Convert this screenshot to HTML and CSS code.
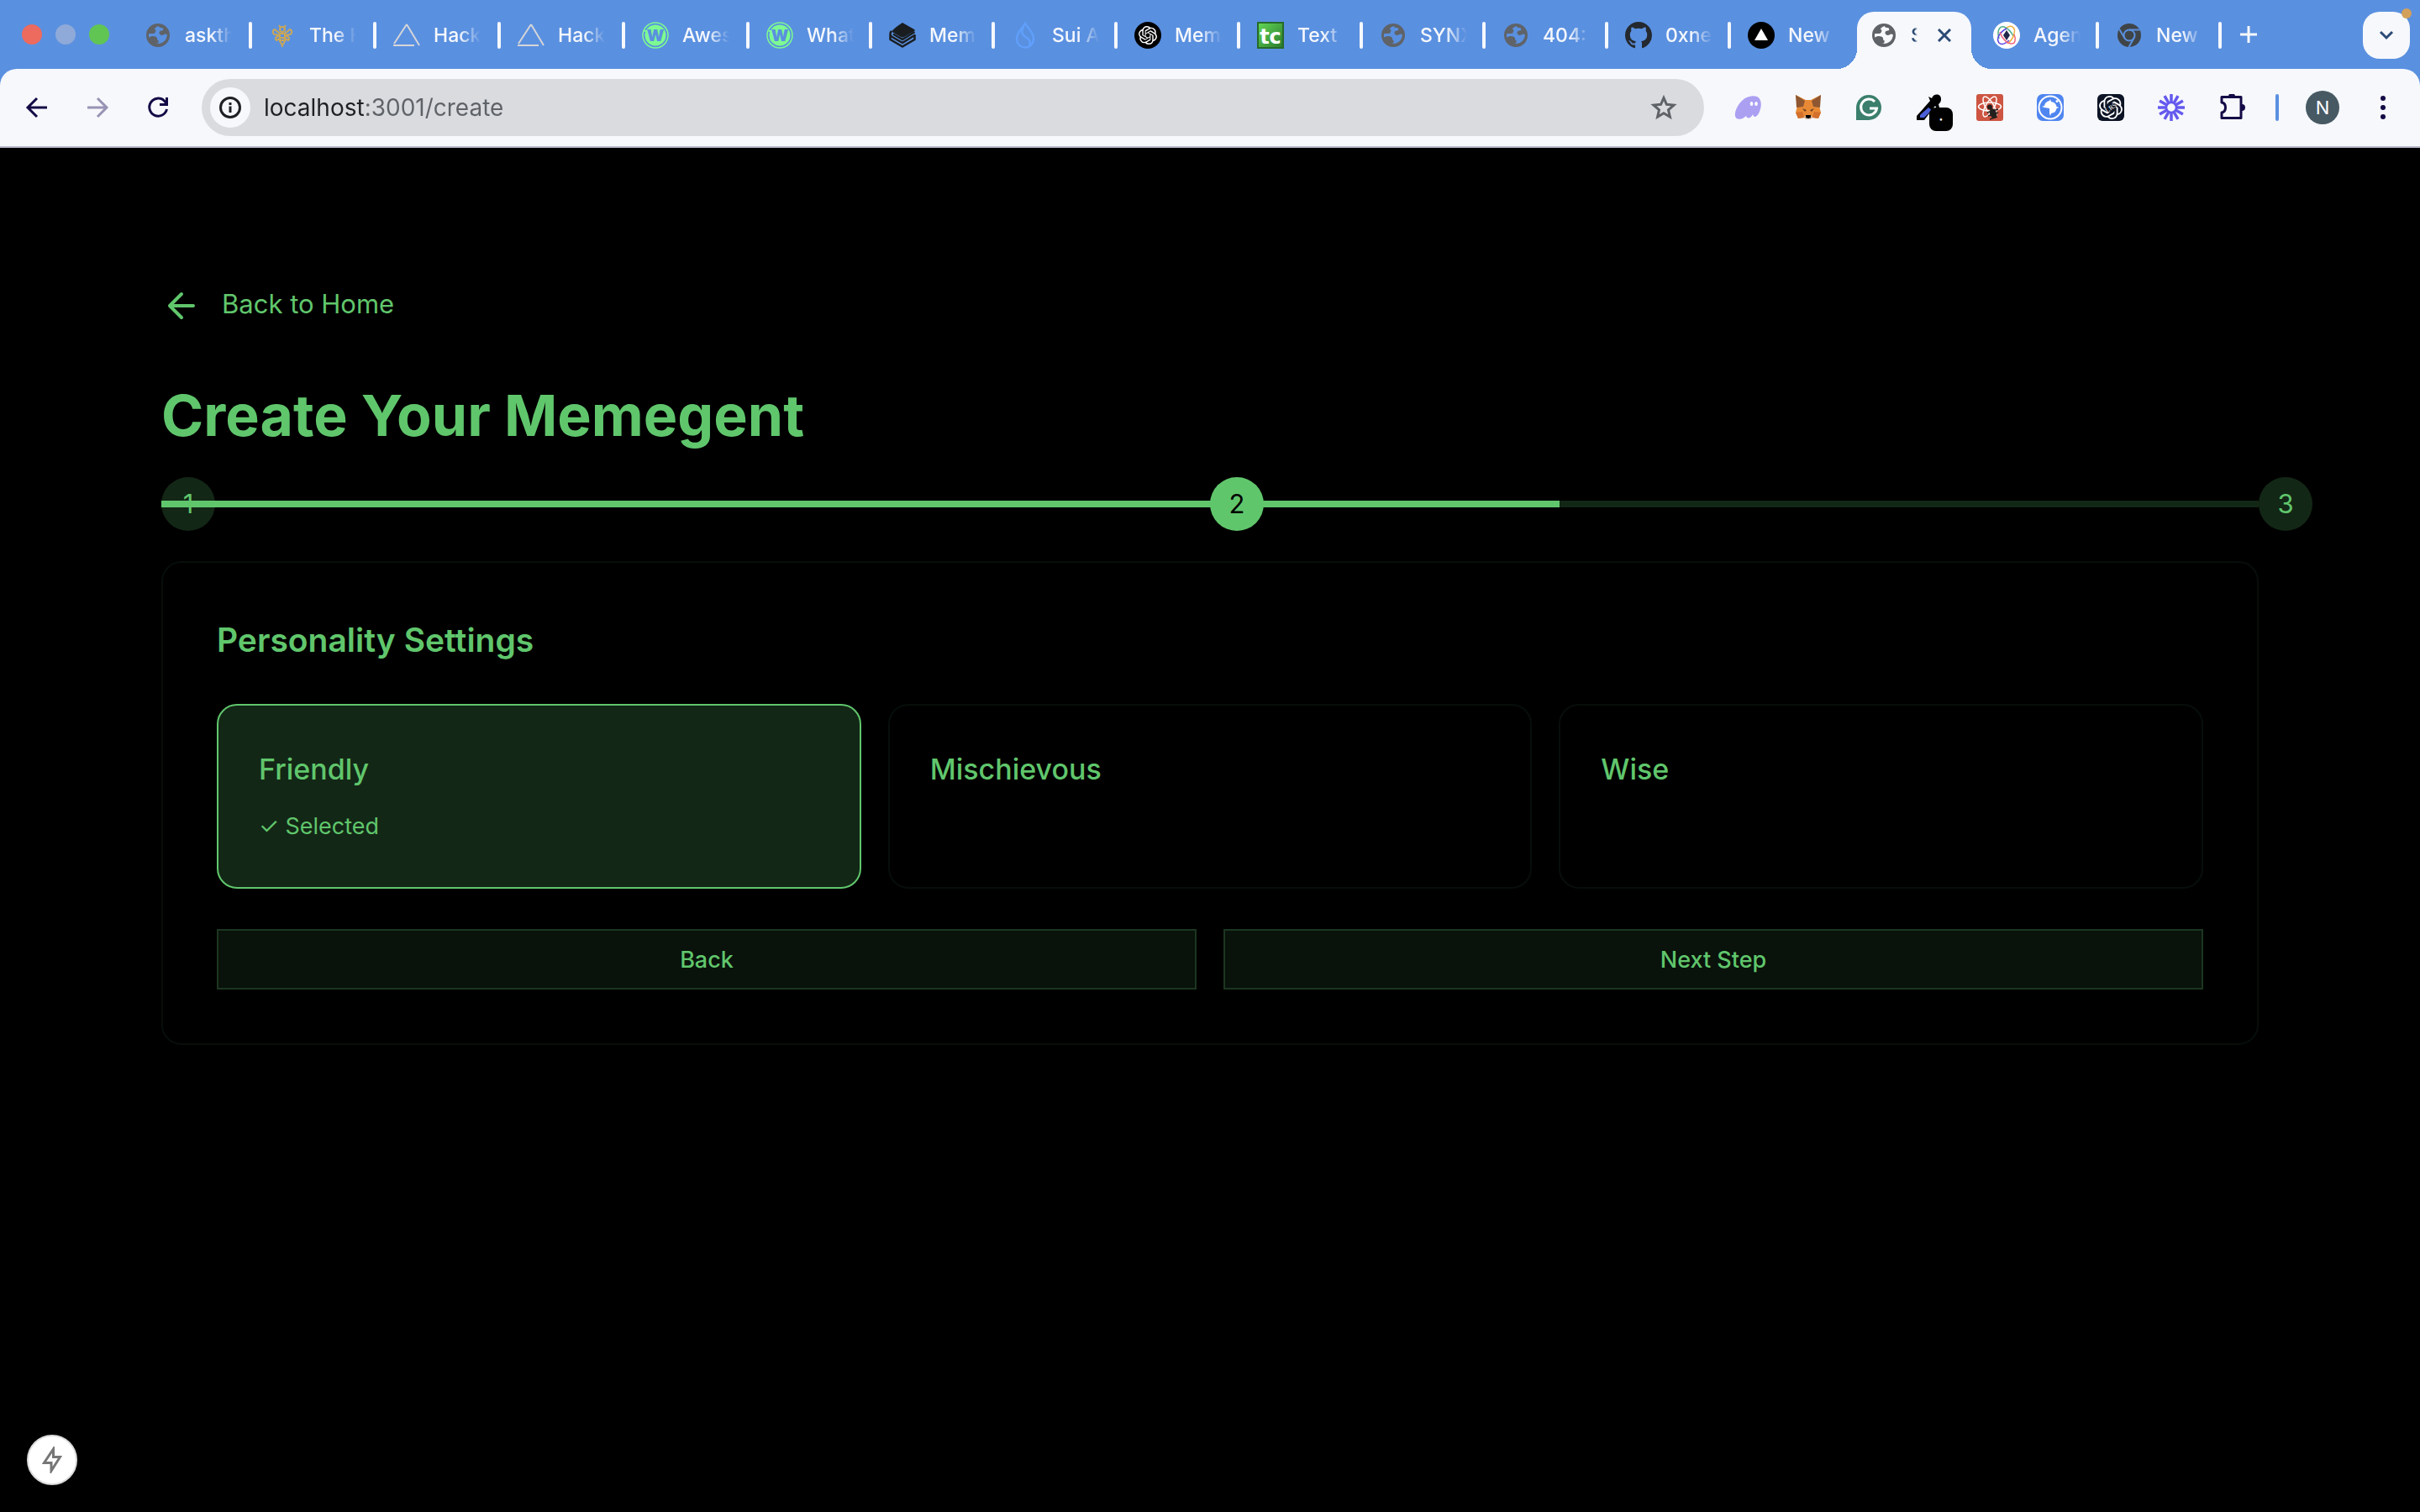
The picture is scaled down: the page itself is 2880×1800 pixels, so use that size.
FILE: index.html
```html
<!DOCTYPE html>
<html lang="en">
<head>
  <meta charset="UTF-8" />
  <meta name="viewport" content="width=device-width, initial-scale=1.0"/>
  <title>Create Your Memegent</title>
  <link rel="stylesheet" href="styles.css">
</head>
<body>

  <!-- Shared icons -->
  <svg class="sprite" aria-hidden="true">
    <symbol id="globe" viewBox="0 0 32 32">
      <path fill-rule="evenodd" d="M16 2a14 14 0 1 0 0 28a14 14 0 1 0 0-28zM17 5c-3 1-5 2-5 4c1 0 2 1 1 3c-1 2-2 2-4 2H5.300c-.5 1.500-.4 3 0 4.500c2-1.500 5-2 7.700-1c2 .8 2.500 2.500 2 4c1.500 0 2 1 1.500 3c-.3 1-1.500 1-2.500 1.300c7 1 12-3 13-10.300c-1.500-1-3-1.300-4-.3c-2 1.500-5 .8-5.500-1.700c-.3-2 1-3 3-3c1.500 0 2-.8 1.700-2c-.3-1.200-1.200-1.500-2.700-1.500c-1.500 0-2.500-.8-2.500-2z"/>
    </symbol>
    <symbol id="peak" viewBox="0 0 32 32">
      <path fill="none" stroke="#d5d5d8" stroke-width="2" d="M1 26L16 3M16 3L31 28M0 28h25"/>
    </symbol>
    <symbol id="wordle" viewBox="0 0 32 32">
      <circle cx="16" cy="16" r="15" fill="none" stroke="#7dfa92" stroke-width="1.500"/>
      <circle cx="16" cy="16" r="12.500" fill="#7dfa92"/>
      <path d="M2 10h9v2H3z" fill="#7dfa92"/>
      <text x="16" y="23" text-anchor="middle" class="w-letter">W</text>
    </symbol>
    <symbol id="knot" viewBox="0 0 24 24">
      <path d="M22.2819 9.8211a5.9847 5.9847 0 0 0-.5157-4.9108 6.0462 6.0462 0 0 0-6.5098-2.9A6.0651 6.0651 0 0 0 4.9807 4.1818a5.9847 5.9847 0 0 0-3.9977 2.9 6.0462 6.0462 0 0 0 .7427 7.0966 5.98 5.98 0 0 0 .511 4.9107 6.051 6.051 0 0 0 6.5146 2.9001A5.9847 5.9847 0 0 0 13.2599 24a6.0557 6.0557 0 0 0 5.7718-4.2058 5.9894 5.9894 0 0 0 3.9977-2.9001 6.0557 6.0557 0 0 0-.7475-7.0729zm-9.022 12.6081a4.4755 4.4755 0 0 1-2.8764-1.0408l.1419-.0804 4.7783-2.7582a.7948.7948 0 0 0 .3927-.6813v-6.7369l2.02 1.1686a.071.071 0 0 1 .038.052v5.5826a4.504 4.504 0 0 1-4.4945 4.4944zm-9.6607-4.1254a4.4708 4.4708 0 0 1-.5346-3.0137l.142.0852 4.783 2.7582a.7712.7712 0 0 0 .7806 0l5.8428-3.3685v2.3324a.0804.0804 0 0 1-.0332.0615L9.74 19.9502a4.4992 4.4992 0 0 1-6.1408-1.6464zM2.3408 7.8956a4.485 4.485 0 0 1 2.3655-1.9728V11.6a.7664.7664 0 0 0 .3879.6765l5.8144 3.3543-2.0201 1.1685a.0757.0757 0 0 1-.071 0l-4.8303-2.7865A4.504 4.504 0 0 1 2.3408 7.872zm16.5963 3.8558L13.1038 8.364 15.1192 7.2a.0757.0757 0 0 1 .071 0l4.8303 2.7913a4.4944 4.4944 0 0 1-.6765 8.1042v-5.6772a.79.79 0 0 0-.407-.667zm2.0107-3.0231l-.142-.0852-4.7735-2.7818a.7759.7759 0 0 0-.7854 0L9.409 9.2297V6.8974a.0662.0662 0 0 1 .0284-.0615l4.8303-2.7866a4.4992 4.4992 0 0 1 6.6802 4.66zM8.3065 12.863l-2.02-1.1638a.0804.0804 0 0 1-.038-.0567V6.0742a4.4992 4.4992 0 0 1 7.3757-3.4537l-.142.0805L8.704 5.459a.7948.7948 0 0 0-.3927.6813zm1.0976-2.3654l2.602-1.4998 2.6069 1.4998v2.9994l-2.5974 1.4997-2.6067-1.4997Z"/>
    </symbol>
  </svg>

  <header class="browser">
    <div class="tab-strip">
      <div class="lights">
        <span class="light red"></span>
        <span class="light blue"></span>
        <span class="light green"></span>
      </div>

      <button class="tab wide"><svg class="favicon gray"><use href="#globe"/></svg><span class="tab-name">askth</span></button>
      <button class="tab wide">
        <svg class="favicon" viewBox="0 0 32 32" fill="none" stroke="#c9a659" stroke-width="2">
          <circle cx="16" cy="9" r="3"/><path d="M14 7l-2-3M18 7l2-3M13 14L7 9C4 10 4 14 7 15l6 1zM19 14l6-5c3 1 3 5 0 6l-6 1zM12 17c-4 0-5 3-3 5l4-2M20 17c4 0 5 3 3 5l-4-2M13 14h6v9l-3 5-3-5zM13 19h6M13 22h6M16 27v3"/>
        </svg>
        <span class="tab-name">The H</span>
      </button>
      <button class="tab wide"><svg class="favicon"><use href="#peak"/></svg><span class="tab-name">Hack</span></button>
      <button class="tab wide"><svg class="favicon"><use href="#peak"/></svg><span class="tab-name">Hack</span></button>
      <button class="tab wide"><svg class="favicon"><use href="#wordle"/></svg><span class="tab-name">Awes</span></button>
      <button class="tab"><svg class="favicon"><use href="#wordle"/></svg><span class="tab-name">What</span></button>
      <button class="tab">
        <svg class="favicon" viewBox="0 0 32 32">
          <path fill="#191d20" d="M16 1l14 8c1 .6 1 1.400 0 2L18 18c-1.300.8-2.700.8-4 0L3 11.500C6 8 11 4 16 1z"/>
          <path fill="none" stroke="#191d20" stroke-width="2.500" stroke-linejoin="round" d="M3 11c-2 2-2 5 0 6.500l13 7.500 14.500-9v5L16 29.500 1.500 21v-6M5 14.500l11 6.500 14.500-9"/>
        </svg>
        <span class="tab-name">Mem</span>
      </button>
      <button class="tab">
        <svg class="favicon" viewBox="0 0 32 32" fill="none" stroke="#609ffa" stroke-width="2.500">
          <path d="M16 2c-4 6-10 11-10 18 0 6 4.500 10.500 10 10.500S26 26 26 20C26 13 20 8 16 2zM14 6c-4 9 0 10 4 13 4 3 5 7 2 11"/>
        </svg>
        <span class="tab-name">Sui A</span>
      </button>
      <button class="tab"><span class="favicon disc"><svg class="knot-small"><use href="#knot"/></svg></span><span class="tab-name">Mem</span></button>
      <button class="tab">
        <svg class="favicon" viewBox="0 0 32 32">
          <defs><linearGradient id="leaf" x1="0" y1="0" x2="1" y2="1"><stop offset="0" stop-color="#63d857"/><stop offset="1" stop-color="#2a7a2c"/></linearGradient></defs>
          <rect x="1" y="1" width="30" height="30" fill="url(#leaf)" stroke="#276a29" stroke-width="2"/>
          <text x="16" y="26" text-anchor="middle" class="tc-letters">tc</text>
        </svg>
        <span class="tab-name">Text</span>
      </button>
      <button class="tab"><svg class="favicon gray"><use href="#globe"/></svg><span class="tab-name">SYNX</span></button>
      <button class="tab"><svg class="favicon gray"><use href="#globe"/></svg><span class="tab-name">404:</span></button>
      <button class="tab">
        <svg class="favicon" viewBox="0 0 16 16"><path fill="#24292f" d="M8 0C3.580 0 0 3.580 0 8c0 3.540 2.290 6.530 5.470 7.590.4.070.55-.17.55-.38 0-.19-.01-.82-.01-1.490-2.010.37-2.530-.49-2.690-.94-.09-.23-.48-.94-.82-1.130-.28-.15-.68-.52-.01-.53.63-.01 1.080.58 1.230.82.72 1.210 1.870.87 2.330.66.07-.52.28-.87.51-1.070-1.780-.2-3.640-.89-3.640-3.950 0-.87.31-1.590.82-2.150-.08-.2-.36-1.020.08-2.120 0 0 .67-.21 2.200.82.64-.18 1.320-.27 2-.27.68 0 1.360.09 2 .27 1.530-1.040 2.200-.82 2.200-.82.44 1.100.16 1.920.08 2.120.51.56.82 1.270.82 2.150 0 3.070-1.870 3.750-3.650 3.950.29.25.54.73.54 1.480 0 1.070-.01 1.930-.01 2.200 0 .21.15.46.55.38A8.013 8.013 0 0 0 16 8c0-4.420-3.580-8-8-8z"/></svg>
        <span class="tab-name">0xne</span>
      </button>
      <button class="tab last">
        <svg class="favicon" viewBox="0 0 32 32"><circle cx="16" cy="16" r="16"/><path fill="#fff" d="M16 8l8 14H8z"/></svg>
        <span class="tab-name">New</span>
      </button>

      <div class="tab-active">
        <svg class="favicon gray"><use href="#globe"/></svg>
        <span class="tab-name short">S</span>
        <button class="close-tab" aria-label="Close tab"><svg viewBox="0 0 16 16" fill="none" stroke="#2b4a75" stroke-width="3"><path d="M1 1l14 14M15 1L1 15"/></svg></button>
      </div>

      <button class="tab">
        <svg class="favicon" viewBox="0 0 32 32" fill="none" stroke-width="1.500">
          <circle cx="16" cy="16" r="16" fill="#fff"/>
          <path stroke="#4fae8c" d="M7 20C4 10 8 3 15 7c4 2 7 6 9 10"/>
          <path stroke="#efb23e" d="M16 7c6-4 11 0 9 7-1 5-4 9-8 12"/>
          <path stroke="#5a3fe0" d="M16 8C8 12 3 20 7 25c3 3 8 1 12-3"/>
          <path stroke="#ef6a80" d="M8 12c2 7 8 14 14 14 5 0 5-6 3-11"/>
          <path fill="#22284a" d="M16 10l4 6-4 6-4-6z"/>
        </svg>
        <span class="tab-name">Agen</span>
      </button>
      <button class="tab">
        <svg class="favicon" viewBox="0 0 32 32">
          <circle cx="16" cy="16" r="14" fill="#3f4448"/>
          <circle cx="16" cy="16" r="6.500" fill="none" stroke="#5a90e0" stroke-width="2"/>
          <path fill="none" stroke="#5a90e0" stroke-width="2" d="M16 9.500h12.500M10.400 19.200L4 8.500M21.600 19.200L15.500 30"/>
        </svg>
        <span class="tab-name">New</span>
      </button>

      <button class="new-tab" aria-label="New tab"><svg viewBox="0 0 20 20" fill="none" stroke="#f6f8fc" stroke-width="3"><path d="M10 0v20M0 10h20"/></svg></button>
      <button class="tab-menu" aria-label="Search tabs">
        <svg viewBox="0 0 18 12" fill="none" stroke="#2b4a75" stroke-width="3"><path d="M2 2l7 7 7-7"/></svg>
        <span class="notice"></span>
      </button>
    </div>

    <div class="toolbar">
      <button class="tool" aria-label="Back"><svg viewBox="0 0 32 32" fill="none" stroke="#140a46" stroke-width="3"><path d="M28 16H6M16 5L5 16l11 11"/></svg></button>
      <button class="tool" aria-label="Forward"><svg viewBox="0 0 32 32" fill="none" stroke="#9893b4" stroke-width="3"><path d="M4 16h22M16 5l11 11-11 11"/></svg></button>
      <button class="tool" aria-label="Reload"><svg viewBox="0 0 32 32" fill="none" stroke="#140a46" stroke-width="3"><path d="M26.500 18a10.500 10.500 0 1 1-3-10L26 11M26.500 4v8.500H18"/></svg></button>

      <div class="address">
        <button class="site-info" aria-label="Site information"><svg viewBox="0 0 26 26" fill="none" stroke="#1f2023" stroke-width="3"><circle cx="13" cy="13" r="11.500"/><path d="M13 11.500V19M13 7v3"/></svg></button>
        <input type="text" aria-label="Address" value="localhost:3001/create">
        <button class="star" aria-label="Bookmark"><svg viewBox="0 0 32 32" fill="none" stroke="#5f6368" stroke-width="3"><path d="M16 4.500l3.400 7.800 8.600.8-6.500 5.700 1.900 8.400L16 22.800l-7.400 4.400 1.900-8.400L4 13.100l8.600-.8z"/></svg></button>
      </div>

      <button class="tool" aria-label="Wallet">
        <svg viewBox="0 0 32 32"><path fill="#ab9ff2" d="M4 29.500C-2 28 1 16 9 8c5-5 12-7 18-5 6 3 6 12 2 20-2 4-6 6-7 1-2 5-7 6-8 2-3 3-6 4.500-10 3.500z"/><ellipse cx="20.500" cy="11.500" rx="1.800" ry="2.500" fill="#fff"/><ellipse cx="26" cy="11.500" rx="1.800" ry="2.500" fill="#fff"/></svg>
      </button>
      <button class="tool" aria-label="Fox wallet">
        <svg viewBox="0 0 32 32"><path fill="#e88a35" d="M1 1l12 6h6l12-6-2 13 2 8-3 7-7-1-3 2h-4l-3-2-7 1-3-7 2-8z"/><path fill="#8e5731" d="M1 1l11 7-2 7-8 1zM31 1L20 8l2 7 8 1z"/><path fill="#d2702c" d="M1 22l8-1 2 7-7 1zM31 22l-8-1-2 7 7 1z"/><path fill="#6b4124" d="M9 17l5 2-2 2zM23 17l-5 2 2 2z"/><path fill="#cfc0b4" d="M11 27l3-2h4l3 2-3 3h-4z"/><path d="M13 25h6v3l-3 1-3-1z"/></svg>
      </button>
      <button class="tool" aria-label="Writing assistant">
        <svg viewBox="0 0 32 32"><path fill="#3b7f6c" d="M16 1a15 15 0 1 1 0 30H1V16A15 15 0 0 1 16 1z"/><path fill="none" stroke="#fff" stroke-width="3" d="M23 9a9.500 9.500 0 1 0 2.500 8H17"/></svg>
      </button>
      <button class="tool" aria-label="Color picker">
        <svg viewBox="0 0 32 32"><path d="M15 3l4 2c2-6 11-6 11 1 0 3-1 4-3 6l1 4-3 1-2-3-13 17H1v-5L17 8z"/><path fill="#4b60d8" d="M15 16l4 3-9 9H5v-3z"/></svg>
        <span class="badge">·</span>
      </button>
      <button class="tool" aria-label="Developer tools">
        <svg viewBox="0 0 32 32"><rect width="32" height="32" rx="3" fill="#cd5542"/><g fill="none" stroke="#fff" stroke-width="1.500"><ellipse cx="16" cy="15" rx="13.500" ry="5"/><ellipse cx="16" cy="15" rx="13.500" ry="5" transform="rotate(60 16 15)"/><ellipse cx="16" cy="15" rx="13.500" ry="5" transform="rotate(120 16 15)"/></g><circle cx="16" cy="15.500" r="3" fill="#24201e"/><ellipse cx="20" cy="23" rx="4" ry="6" fill="#24201e" transform="rotate(-20 20 23)"/><path stroke="#24201e" stroke-width="1.500" d="M13 22l13-4M14 26l12-4M16 30l9-3"/></svg>
      </button>
      <button class="tool" aria-label="Compass">
        <svg viewBox="0 0 32 32"><rect width="32" height="32" rx="7" fill="#4f86f0"/><circle cx="16" cy="16" r="13.500" fill="none" stroke="#fff" stroke-width="2"/><path fill="#fff" d="M16 6l1 3c4 .5 6 2.500 6.500 6l3 1-3 1c-.5 3.500-2.500 5.500-6.500 6l-1 3-1-3v-6l-6-1-3-1 3-1c.5-3.500 2.500-5.500 6-6z"/><circle cx="24" cy="8.500" r="1.500" fill="#fff"/></svg>
      </button>
      <button class="tool" aria-label="Chat search">
        <svg viewBox="0 0 32 32"><rect width="32" height="32" rx="6" fill="#0c1425"/><use href="#knot" x="2" y="2" width="28" height="28" fill="#fff"/><circle cx="16" cy="16" r="6" fill="#0c1425"/><text x="16" y="19" text-anchor="middle" class="knot-letters" transform="rotate(-35 16 16)">LRS</text></svg>
      </button>
      <button class="tool" aria-label="Burst">
        <svg viewBox="0 0 32 32" fill="none" stroke="#6459ee" stroke-width="3.500"><circle cx="16" cy="16" r="6" stroke-width="2.500"/><path d="M16 0v10M16 22v10M0 16h10M22 16h10M8 2.100l5 8.700M19 21.200l5 8.700M2.100 8l8.700 5M21.200 19l8.700 5M2.100 24l8.700-5M21.200 13l8.700-5M8 29.900l5-8.700M19 10.800l5-8.700"/></svg>
      </button>
      <button class="tool" aria-label="Extensions">
        <svg viewBox="0 0 32 32"><path fill="none" stroke="#140a46" stroke-width="3" stroke-linejoin="round" d="M4 3.500h23v25H4V22c6-1 6-11 0-12z"/><path fill="#140a46" d="M12 3a4 4 0 0 1 8 0zM28 12a4 4 0 0 1 0 8z"/></svg>
      </button>

      <span class="divider"></span>
      <button class="tool" aria-label="Profile"><span class="avatar">N</span></button>
      <button class="tool" aria-label="Menu"><svg viewBox="0 0 32 32" fill="#140a46"><circle cx="16" cy="5" r="3"/><circle cx="16" cy="16" r="3"/><circle cx="16" cy="27" r="3"/></svg></button>
    </div>
  </header>

  <main class="page">
    <a class="back-link" href="#">
      <svg viewBox="0 0 24 24" fill="none" stroke="currentColor" stroke-width="2" stroke-linecap="round" stroke-linejoin="round"><path d="M12 19l-7-7 7-7M19 12H5"/></svg>
      <span>Back to Home</span>
    </a>

    <h1>Create Your Memegent</h1>

    <div class="steps">
      <div class="track"><div class="fill"></div></div>
      <div class="circles">
        <span class="circle">1</span>
        <span class="circle current">2</span>
        <span class="circle next">3</span>
      </div>
    </div>

    <section class="card">
      <h2>Personality Settings</h2>
      <div class="options">
        <button class="option selected" aria-pressed="true">
          <span class="option-name">Friendly</span>
          <span class="option-state">✓ Selected</span>
        </button>
        <button class="option" aria-pressed="false"><span class="option-name">Mischievous</span></button>
        <button class="option" aria-pressed="false"><span class="option-name">Wise</span></button>
      </div>
      <div class="actions">
        <button class="action">Back</button>
        <button class="action">Next Step</button>
      </div>
    </section>
  </main>

  <button class="dev-button" aria-label="Dev tools">
    <svg viewBox="0 0 24 32" fill="none" stroke="#767676" stroke-width="3"><path d="M13.500 3L2.500 19.500h8.500V29L21.500 12.500H13.500z"/></svg>
  </button>

  <script>
    const options = document.querySelectorAll('.option');

    // Only one personality can be chosen
    options.forEach((option) => {
      option.addEventListener('click', () => {
        options.forEach((o) => {
          o.classList.remove('selected');
          o.setAttribute('aria-pressed', 'false');
          const state = o.querySelector('.option-state');
          if (state) state.remove();
        });
        option.classList.add('selected');
        option.setAttribute('aria-pressed', 'true');
        option.insertAdjacentHTML('beforeend', '<span class="option-state">✓ Selected</span>');
      });
    });
  </script>

</body>
</html>
```
FILE: styles.css
```css
* {
  box-sizing: border-box;
}

body {
  margin: 0;
  min-height: 100vh;
  background-color: #000;
  color: #60c66c;
  font-family: Inter, "Liberation Sans", sans-serif;
}

button {
  margin: 0;
  padding: 0;
  border: none;
  background: none;
  color: inherit;
  font: inherit;
  cursor: pointer;
}

.sprite {
  display: none;
}

/* Browser bar */
.browser {
  background-color: #5a90e0;
}

.tab-strip {
  display: flex;
  height: 82px;
  padding: 0 12px 0 26px;
}

.lights {
  display: flex;
  align-items: center;
  gap: 16px;
  width: 126px;
}

.light {
  width: 24px;
  height: 24px;
  border-radius: 50%;
}

.light.red {
  background-color: #ed6a5e;
}

.light.blue {
  background-color: #8faad8;
}

.light.green {
  background-color: #61c554;
}

.tab {
  flex: 0 1 146px;
  display: flex;
  align-items: center;
  gap: 16px;
  padding: 2px 0 0 20px;
  color: #f6f8fc;
}

.tab.wide {
  flex-basis: 148px;
}

.tab.last {
  flex-basis: 150px;
}

.tab::after {
  content: "";
  width: 4px;
  height: 32px;
  margin-left: auto;
  border-radius: 2px;
  background-color: #f6f8fc;
}

.tab.last::after {
  display: none;
}

.favicon {
  width: 32px;
  height: 32px;
  flex: none;
}

.favicon.gray {
  fill: #5f6368;
}

.favicon.disc {
  display: flex;
  align-items: center;
  justify-content: center;
  border-radius: 50%;
  background-color: #000;
}

.knot-small {
  width: 22px;
  height: 22px;
  fill: #fff;
}

.tab-name {
  width: 56px;
  overflow: hidden;
  white-space: nowrap;
  text-align: left;
  font-size: 23px;
  font-weight: 500;
  line-height: 32px;
  -webkit-mask-image: linear-gradient(to right, #000 55%, transparent);
  mask-image: linear-gradient(to right, #000 55%, transparent);
}

.tab-name.short {
  width: 8px;
}

.tab-active {
  position: relative;
  flex: 0 1 134px;
  display: flex;
  align-items: center;
  gap: 16px;
  height: 68px;
  margin: 14px 6px 0 0;
  padding: 0 16px 12px;
  border-radius: 20px 20px 0 0;
  background-color: #f6f8fc;
  color: #2b4a75;
}

/* Curved feet of the open tab */
.tab-active::before,
.tab-active::after {
  content: "";
  position: absolute;
  bottom: 0;
  width: 24px;
  height: 24px;
}

.tab-active::before {
  right: 100%;
  background: radial-gradient(circle at 0 0, transparent 24px, #f6f8fc 24px);
}

.tab-active::after {
  left: 100%;
  background: radial-gradient(circle at 100% 0, transparent 24px, #f6f8fc 24px);
}

.close-tab {
  display: flex;
  margin-left: auto;
  padding: 8px;
}

.close-tab svg {
  width: 16px;
  height: 16px;
}

.new-tab {
  display: flex;
  align-items: center;
  justify-content: center;
  width: 64px;
}

.new-tab svg {
  width: 20px;
  height: 20px;
}

.tab-menu {
  position: relative;
  display: flex;
  align-items: center;
  justify-content: center;
  width: 56px;
  height: 56px;
  margin: 14px 0 0 auto;
  border-radius: 20px;
  background-color: #f6f8fc;
}

.tab-menu svg {
  width: 18px;
  height: 12px;
}

.notice {
  position: absolute;
  top: -4px;
  right: -2px;
  width: 12px;
  height: 12px;
  border-radius: 50%;
  background-color: #d3a05c;
}

.w-letter {
  fill: #5a90e0;
  font: 900 19px Inter, sans-serif;
}

.tc-letters {
  fill: #fff;
  font: bold 24px "DejaVu Sans", sans-serif;
}

.knot-letters {
  fill: #fff;
  font: 8px "Liberation Serif", serif;
}

.toolbar {
  display: flex;
  align-items: center;
  height: 94px;
  padding: 0 8px;
  border-bottom: 2px solid #b9bccd;
  border-radius: 20px 20px 0 0;
  background-color: #f6f8fc;
}

.tool {
  position: relative;
  display: flex;
  align-items: center;
  justify-content: center;
  flex: none;
  width: 72px;
  height: 68px;
}

.tool svg {
  width: 32px;
  height: 32px;
}

.address {
  flex: 1;
  display: flex;
  align-items: center;
  height: 68px;
  margin: 0 16px;
  padding: 0 32px 0 10px;
  border-radius: 34px;
  background-color: #d9dbdf;
}

.site-info {
  display: flex;
  align-items: center;
  justify-content: center;
  width: 48px;
  height: 48px;
  border-radius: 50%;
  background-color: #f6f8fc;
}

.site-info svg {
  width: 26px;
  height: 26px;
}

/* Host in dark, path in gray */
.address input {
  flex: 1;
  margin: 0 16px;
  padding: 0;
  border: none;
  outline: none;
  background: linear-gradient(to right, #1f2023 120px, #5f6368 120px);
  -webkit-background-clip: text;
  background-clip: text;
  color: transparent;
  font: 28px Inter, "Liberation Sans", sans-serif;
}

.star {
  display: flex;
}

.star svg {
  width: 32px;
  height: 32px;
}

.badge {
  position: absolute;
  left: 36px;
  top: 34px;
  width: 28px;
  height: 28px;
  border-radius: 8px;
  background-color: #000;
  color: #fff;
  font-size: 20px;
  line-height: 28px;
  text-align: center;
}

.divider {
  width: 4px;
  height: 32px;
  margin: 0 16px;
  border-radius: 2px;
  background-color: #5a90e0;
}

.avatar {
  width: 40px;
  height: 40px;
  border-radius: 50%;
  background-color: #475963;
  color: #fff;
  font-size: 22px;
  line-height: 40px;
}

/* Page */
.page {
  padding: 160px 192px 0;
}

.back-link {
  display: flex;
  align-items: flex-start;
  gap: 24px;
  width: fit-content;
  color: inherit;
  font-size: 31px;
  line-height: 52px;
  text-decoration: none;
}

.back-link svg {
  width: 48px;
  height: 48px;
  margin-top: 4px;
}

h1 {
  margin: 64px 0 32px;
  font-size: 68px;
  font-weight: 700;
  line-height: 84px;
}

.steps {
  display: grid;
  align-items: center;
  margin-bottom: 36px;
}

.track,
.circles {
  grid-area: 1 / 1;
}

.track {
  z-index: 1;
  height: 8px;
  background-color: #132716;
}

.fill {
  width: 66.666%;
  height: 100%;
  background-color: #60c66c;
}

.circles {
  display: flex;
  justify-content: space-between;
  margin-right: -64px;
}

.circle {
  width: 64px;
  height: 64px;
  border-radius: 50%;
  background-color: #132716;
  font-size: 31px;
  line-height: 64px;
  text-align: center;
}

.circle.current,
.circle.next {
  position: relative;
  z-index: 2;
}

.circle.current {
  background-color: #60c66c;
  color: #000;
}

.card {
  padding: 64px;
  border: 2px solid #070e0a;
  border-radius: 24px;
}

h2 {
  margin: 0 0 48px;
  font-size: 39px;
  font-weight: 600;
  line-height: 56px;
}

.options {
  display: grid;
  grid-template-columns: repeat(3, 1fr);
  gap: 32px;
}

.option {
  display: flex;
  flex-direction: column;
  gap: 20px;
  padding: 48px 48px 52px;
  border: 2px solid #070e0a;
  border-radius: 24px;
  text-align: left;
}

.option.selected {
  border-color: #60c66c;
  background-color: #132716;
}

.option-name {
  font-size: 34px;
  font-weight: 500;
  line-height: 56px;
}

.option-state {
  font-size: 27px;
  line-height: 40px;
}

.actions {
  display: grid;
  grid-template-columns: 1fr 1fr;
  gap: 32px;
  margin-top: 48px;
}

.action {
  height: 72px;
  border: 2px solid #1c3620;
  background-color: #09120b;
  font-size: 27px;
  font-weight: 500;
}

.action:hover {
  background-color: #132716;
}

.dev-button {
  position: fixed;
  left: 32px;
  bottom: 32px;
  display: flex;
  align-items: center;
  justify-content: center;
  width: 60px;
  height: 60px;
  border: 2px solid #dcdcdc;
  border-radius: 50%;
  background-color: #fff;
}

.dev-button svg {
  width: 24px;
  height: 32px;
}
```
